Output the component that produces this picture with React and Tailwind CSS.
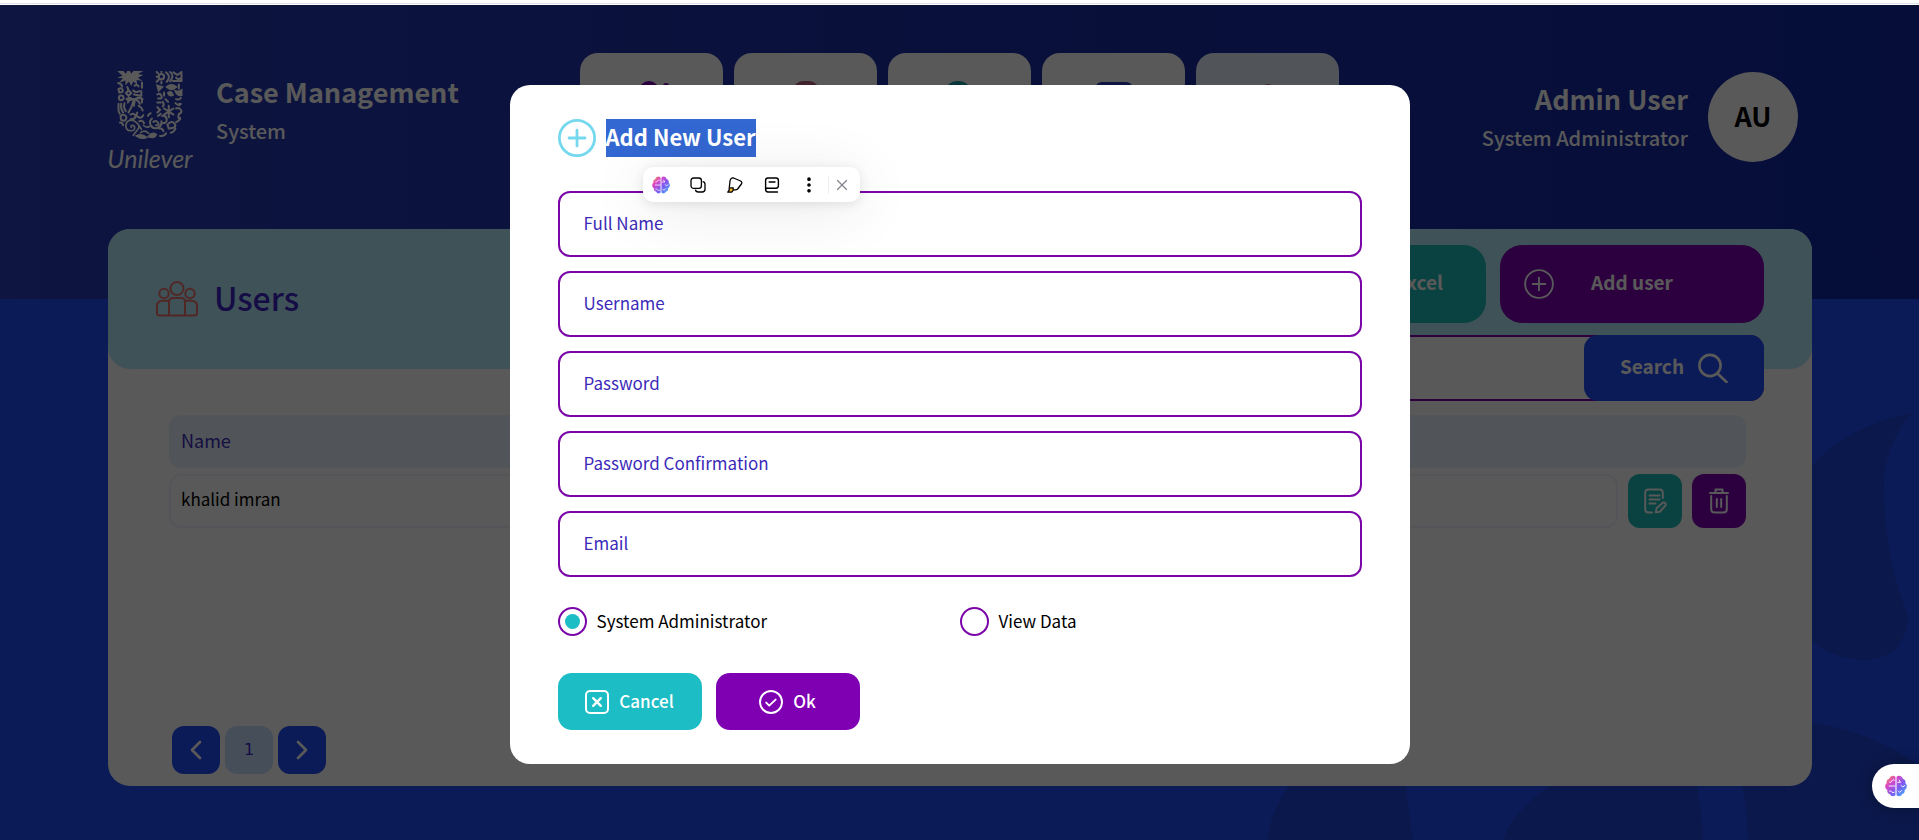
import { useState } from 'react'
import { ChevronLeft, ChevronRight, EllipsisVertical, X } from 'lucide-react'

const FIELDS = [
  { name: 'fullName', label: 'Full Name', type: 'text' },
  { name: 'username', label: 'Username', type: 'text' },
  { name: 'password', label: 'Password', type: 'password' },
  { name: 'passwordConfirmation', label: 'Password Confirmation', type: 'password' },
  { name: 'email', label: 'Email', type: 'email' },
]

const USERS = [{ id: 1, name: 'khalid imran' }]

export default function App() {
  return (
    <div className="min-h-screen flex flex-col bg-[#224df8] font-['Noto_Sans_CJK_SC',sans-serif]">
      <div className="h-[5px] bg-white border-t-[3px] border-white">
        <div className="h-px bg-[#dde3e8]" />
      </div>
      <div className="relative flex-1 flex flex-col overflow-hidden">
        <div className="absolute inset-x-0 top-0 h-[294px] bg-linear-to-r from-[#283cb7] via-[#1a30a8] to-[#1027a2]" />
        <Swirls />
        <Header />
        <UsersCard />
      </div>
      <AddUserModal />
      <button
        aria-label="Open assistant"
        className="fixed right-0 bottom-8 w-[47px] h-11 pl-[13px] rounded-l-full bg-white flex items-center shadow-[0_0_16px_rgba(0,0,0,0.3)]"
      >
        <BrainIcon className="size-[22px]" />
      </button>
    </div>
  )
}

function Header() {
  return (
    <header className="relative h-56 shrink-0 pl-[108px] pr-[121px] flex items-start justify-between">
      <div className="flex-1 flex gap-6 pt-[66px]">
        <Logo />
        <div className="text-white">
          <div className="text-[27px] leading-[42px] font-bold">Case Management</div>
          <div className="text-xl leading-[36px] font-medium">System</div>
        </div>
      </div>
      <nav className="flex gap-[11px] pt-12 ml-[13px]">
        <NavCard label="Cases">
          <circle cx="17" cy="10" r="10" fill="#7f00b2" />
          <circle cx="34" cy="5" r="3" fill="#7f00b2" />
        </NavCard>
        <NavCard label="Reports">
          <rect x="7" y="0" width="26" height="30" rx="10" fill="#b8607f" />
        </NavCard>
        <NavCard label="Customers">
          <circle cx="18" cy="15" r="15" fill="#1d9da5" />
        </NavCard>
        <NavCard label="Data">
          <rect x="1" y="1" width="38" height="30" rx="7" fill="#283cb7" />
        </NavCard>
        <NavCard label="Users" active>
          <circle cx="20" cy="9" r="5" fill="none" stroke="#e8605c" strokeWidth="2" />
        </NavCard>
      </nav>
      <div className="flex-1 flex justify-end items-start gap-5 pt-[67px] text-white">
        <div className="text-right pt-1.5">
          <div className="text-[27px] leading-[42px] font-bold">Admin User</div>
          <div className="text-xl leading-[36px] font-medium">System Administrator</div>
        </div>
        <div className="size-[90px] pb-0.5 rounded-full bg-white text-black text-[27px] font-bold flex items-center justify-center">
          AU
        </div>
      </div>
    </header>
  )
}

function NavCard({ label, active, children }) {
  return (
    <a
      href="#"
      aria-label={label}
      className={`w-[143px] h-32 pt-7 rounded-[18px] flex justify-center ${active ? 'bg-[#e7f0ff]' : 'bg-white'}`}
    >
      <svg viewBox="0 0 40 40" className="size-10">
        {children}
      </svg>
    </a>
  )
}

function UsersCard() {
  return (
    <main className="relative flex-1 flex flex-col ml-[108px] mr-[107px] mb-[54px] rounded-[22px] bg-white">
      <div className="h-[140px] rounded-[22px] bg-[#b4eafb] pl-12 pr-12 flex justify-between">
        <h1 className="flex items-center gap-4 text-[32px] font-medium text-[#3c22c5]">
          <UsersIcon className="w-[42px] h-9" />
          <span className="pb-1">Users</span>
        </h1>
        <div className="w-[760px] pt-4 flex flex-col gap-3">
          <div className="flex justify-end gap-3.5 text-[19px] font-bold text-white">
            <button className="w-[264px] h-[78px] shrink-0 pr-[43px] pb-1 rounded-[22px] bg-[#1dbdb9] text-right">
              Export to Excel
            </button>
            <button className="w-[264px] h-[78px] shrink-0 px-6 rounded-[22px] bg-[#7f00b2] grid grid-cols-[30px_1fr_30px] items-center">
              <PlusCircle className="size-[30px]" width={1.9} />
              <span className="pb-1">Add user</span>
            </button>
          </div>
          <div className="h-[66px] shrink-0 flex rounded-[14px] border-2 border-[#7f00b2] bg-white">
            <input aria-label="Search users" className="flex-1 min-w-0 px-6 outline-none" />
            <button className="w-[180px] -m-0.5 rounded-[14px] bg-[#224df8] flex items-center justify-center gap-3.5 text-[19px] font-bold text-white">
              <span className="pb-1">Search</span>
              <svg viewBox="0 0 30 30" className="size-[30px]" fill="none" stroke="currentColor" strokeWidth="2.6" strokeLinecap="round">
                <circle cx="12" cy="12.5" r="10.600" />
                <path d="M20 21l8.500 8" />
              </svg>
            </button>
          </div>
        </div>
      </div>

      <table className="mt-10 ml-[61px] mr-[66px] border-separate border-spacing-x-0 border-spacing-y-1.5 text-left">
        <thead>
          <tr className="h-[53px] text-lg text-[#3c2bb9]">
            <th className="pl-3 pt-0 pb-1 rounded-l-xl bg-[#e7f0ff] font-normal">Name</th>
            <td className="w-32 rounded-r-xl bg-[#e7f0ff]" />
          </tr>
        </thead>
        <tbody>
          {USERS.map((u) => (
            <tr key={u.id} className="h-[54px] text-[17px]">
              <td className="pl-2.5 pt-0 pb-1 rounded-xl border-2 border-[#f0f3ff]">{u.name}</td>
              <td className="w-32 p-0">
                <div className="flex justify-end gap-2.5 text-white">
                  <button aria-label="Edit" className="size-[54px] rounded-xl bg-[#1dbdb9] flex items-center justify-center">
                    <EditIcon />
                  </button>
                  <button aria-label="Delete" className="size-[54px] rounded-xl bg-[#7f00b2] flex items-center justify-center">
                    <TrashIcon />
                  </button>
                </div>
              </td>
            </tr>
          ))}
        </tbody>
      </table>

      <div className="mt-auto pl-16 pb-3 flex gap-[5px]">
        <button aria-label="Previous page" className="size-12 rounded-xl bg-[#224df8] text-white flex items-center justify-center">
          <ChevronLeft className="size-8" />
        </button>
        <button className="size-12 rounded-xl bg-[#c8e3ff] text-[#3c22c5] font-['DejaVu_Sans',sans-serif] text-base">1</button>
        <button aria-label="Next page" className="size-12 rounded-xl bg-[#224df8] text-white flex items-center justify-center">
          <ChevronRight className="size-8" />
        </button>
      </div>
    </main>
  )
}

function AddUserModal() {
  const [role, setRole] = useState('admin')
  return (
    <div className="fixed inset-x-0 bottom-0 top-[5px] pt-1 bg-black/65 flex items-center justify-center">
      <form className="relative w-[900px] px-12 py-[34px] rounded-[20px] bg-white">
        <h2 className="flex items-center gap-2.5 text-[22px] leading-[34px] font-bold text-white">
          <PlusCircle className="size-[38px] text-[#75d8ee]" width={2.2} />
          <span className="pb-1 bg-[#3367d1]">Add New User</span>
        </h2>
        <div className="mt-[34px] flex flex-col gap-3.5">
          {FIELDS.map((f) => (
            <input
              key={f.name}
              name={f.name}
              type={f.type}
              placeholder={f.label}
              aria-label={f.label}
              className="h-[66px] px-6 pb-1 rounded-xl border-2 border-[#7a06a8] text-[17px] outline-none placeholder:text-[#3c2bb9]"
            />
          ))}
        </div>
        <div className="mt-[30px] grid grid-cols-2 text-[17px] leading-[27px] text-black">
          <RoleRadio label="System Administrator" value="admin" role={role} onChange={setRole} />
          <RoleRadio label="View Data" value="view" role={role} onChange={setRole} />
        </div>
        <div className="mt-[37px] flex gap-3.5 text-[17px] font-medium text-white">
          <button type="button" className="w-36 h-[57px] rounded-[14px] bg-[#1dbdc5] flex items-center justify-center gap-2.5">
            <svg viewBox="0 0 24 24" className="size-6" fill="none" stroke="currentColor" strokeWidth="2" strokeLinecap="round">
              <rect x="1" y="1" width="22" height="22" rx="4" />
              <path d="M8.200 8.200l7.600 7.600M15.800 8.200l-7.600 7.600" strokeWidth="2.400" />
            </svg>
            <span className="pb-0.5">Cancel</span>
          </button>
          <button type="button" className="w-36 h-[57px] rounded-[14px] bg-[#7f00b2] flex items-center justify-center gap-2.5">
            <svg viewBox="0 0 24 24" className="size-6" fill="none" stroke="currentColor" strokeWidth="1.900" strokeLinecap="round" strokeLinejoin="round">
              <circle cx="12" cy="12" r="11" />
              <path d="M7.200 12.600l3 3 6.400-6" />
            </svg>
            <span className="pb-0.5">Ok</span>
          </button>
        </div>
        <SelectionToolbar />
      </form>
    </div>
  )
}

function RoleRadio({ label, value, role, onChange }) {
  return (
    <label className="flex items-center gap-2.5">
      <input
        type="radio"
        name="role"
        checked={role === value}
        onChange={() => onChange(value)}
        className="appearance-none size-[29px] rounded-full border-2 border-[#7a06a8] bg-clip-content p-[5px] checked:bg-[#1dbdc5]"
      />
      <span className="pb-0.5">{label}</span>
    </label>
  )
}

function SelectionToolbar() {
  return (
    <div className="absolute left-[133px] top-[82px] w-[217px] h-[35px] pr-1 rounded-[10px] bg-white text-black flex items-center shadow-[0_8px_60px_rgba(0,0,0,0.1),0_2px_12px_rgba(0,0,0,0.1)]">
      <ToolButton label="Ask">
        <BrainIcon className="size-[18px]" />
      </ToolButton>
      <ToolButton label="Copy">
        <svg viewBox="0 0 16 16" className="size-4" fill="none" stroke="currentColor" strokeWidth="1.300">
          <rect x="1" y="1" width="10.400" height="10.400" rx="2.600" />
          <path d="M12.600 4.600c1.600.2 2.400 1 2.400 2.600v5c0 1.900-.9 2.800-2.800 2.800H8.400c-1.900 0-2.800-.8-3-2.300" />
        </svg>
      </ToolButton>
      <ToolButton label="Highlight">
        <svg viewBox="0 0 16 16" className="size-4" fill="none" stroke="currentColor" strokeWidth="1.300" strokeLinejoin="round">
          <path d="M2.300 10.500L3 4Q3.600.4 6.600 1L13.600 4Q15.600 5.200 14.400 7L10.600 12Q9.400 13.300 6.600 12.800" />
          <path d="M2.200 10.800h4v2.500l-1.500 1.900H.8l1.400-2z" fill="#f2b632" />
        </svg>
      </ToolButton>
      <ToolButton label="Note">
        <svg viewBox="0 0 16 16" className="size-4" fill="none" stroke="currentColor" strokeWidth="1.400" strokeLinecap="round">
          <path d="M3 11.200h9c1.600 0 2.400-.8 2.400-2.400V3.400c0-1.600-.8-2.400-2.400-2.400H4C2.400 1 1.600 1.800 1.600 3.400v9.200c0 1.600.8 2.400 2.400 2.400h9.500" />
          <path d="M1.600 12.600c0-.9.500-1.400 1.400-1.400M5.200 5h5.800" />
        </svg>
      </ToolButton>
      <ToolButton label="More">
        <EllipsisVertical className="size-5" strokeWidth={2.4} />
      </ToolButton>
      <div className="w-px h-[18px] bg-[#eeeef2]" />
      <button type="button" aria-label="Close" className="flex-1 flex justify-center text-[#85858f]">
        <X className="size-[18px]" strokeWidth={1.6} />
      </button>
    </div>
  )
}

function ToolButton({ label, children }) {
  return (
    <button type="button" aria-label={label} className="w-[37px] flex justify-center">
      {children}
    </button>
  )
}

function PlusCircle({ className, width }) {
  return (
    <svg viewBox="0 0 30 30" className={className} fill="none" stroke="currentColor" strokeWidth={width} strokeLinecap="round">
      <circle cx="15" cy="15" r="13.900" />
      <path d="M15 8.700v12.600M8.700 15h12.600" />
    </svg>
  )
}

function UsersIcon({ className }) {
  return (
    <svg viewBox="0 0 42 36" className={className} fill="none" stroke="#e8706c" strokeWidth="2">
      <circle cx="21" cy="7.500" r="6.500" />
      <circle cx="8" cy="12.500" r="4.700" />
      <circle cx="34" cy="12.500" r="4.700" />
      <path d="M13 34.500V21q0-4 4-4h8q4 0 4 4v13.500" />
      <path d="M13 19.800H6.500Q1 19.800 1 25.500V32q0 2.500 2.500 2.500h35Q41 34.500 41 32v-6.500q0-5.700-5.500-5.700H29" />
    </svg>
  )
}

function EditIcon() {
  return (
    <svg viewBox="0 0 24 26" className="w-6 h-[26px]" fill="none" stroke="currentColor" strokeWidth="1.900" strokeLinecap="round" strokeLinejoin="round">
      <path d="M9 24.500H5.500Q2.200 24.500 2.200 21.200V4.800Q2.200 1.500 5.500 1.500h11Q19.800 1.500 19.800 4.800V10" />
      <path d="M6.500 7.500h10M6.500 11.500h10M6.500 15.500h6" />
      <path d="M12.800 24.300l.7-4 6.300-5.600q1.500-.7 2.500.5t.2 2.300l-5.700 6.300z" />
    </svg>
  )
}

function TrashIcon() {
  return (
    <svg viewBox="0 0 22 26" className="w-[22px] h-[26px]" fill="none" stroke="currentColor" strokeWidth="2" strokeLinecap="round" strokeLinejoin="round">
      <path d="M2 5h18M7.500 4.500V1.500h7v3" />
      <path d="M3.200 8v13q0 3.500 3.500 3.500h8.600q3.500 0 3.500-3.500V8M8.800 11v8M13.200 11v8" />
    </svg>
  )
}

function BrainIcon({ className }) {
  return (
    <svg viewBox="0 0 24 24" className={className}>
      <defs>
        <linearGradient id="brain" x1="0" y1="0" x2="1" y2="1">
          <stop offset="0" stopColor="#f9a03f" />
          <stop offset="0.3" stopColor="#d946c8" />
          <stop offset="0.6" stopColor="#7c5cf0" />
          <stop offset="1" stopColor="#38b6ff" />
        </linearGradient>
      </defs>
      <path
        fill="url(#brain)"
        d="M11.400 2v20c-2 2-5.200 1.400-6-1.200-2.200-.4-3.400-2.400-2.800-4.400C-.2 15-.6 10.600 1.800 9 1.200 6.600 2.400 4.600 4.600 4 5.400.8 9.600-.2 11.400 2zM12.600 2v20c2 2 5.200 1.400 6-1.200 2.200-.4 3.400-2.400 2.800-4.400 2.800-1.400 3.200-5.800.8-7.400.6-2.400-.6-4.400-2.800-5C18.600.8 14.400-.2 12.600 2z"
      />
      <path
        fill="none"
        stroke="#fff"
        strokeWidth="1"
        strokeLinecap="round"
        d="M11 12H4.500M5 8q1.500.8 2.500-1.500T10 5.500M5 17.500q1.500-.5 2.500 1t2.500.5M14 8h3l-1.500-2.500M17.500 11.500l2 1.500 2-1.500M14.500 17.500l1.500 1.500 2-2"
      />
    </svg>
  )
}

function Logo() {
  return (
    <div className="w-[84px] flex flex-col items-center text-white">
      <svg viewBox="0 0 196 206" className="w-[66px] h-[69px]" fill="none" stroke="currentColor" strokeWidth="6" strokeLinecap="round">
        {/* left arm: sun, flower, fish, palm */}
        <path fill="currentColor" stroke="none" d="M0 0h18l8 8 4-8h8l4 8 6-8h30l-16 9 16 3-16 8 14 10-18-3 2 14-12-10-6 14-7-14-11 12 1-15-20 8 12-14L0 20l16-6z" />
        <path d="M3 36q10 2 12 10M30 48q6 8 0 14M52 44q8-6 12 2M74 34v16M4 54q8-6 12 2t-10 8zM26 66l8-8 8 8-8 8zM48 58q8 8 18 2M72 60v14M50 70l20 4" />
        <circle cx="12" cy="80" r="7" />
        <path fill="currentColor" d="M28 84q10-8 16 0-8 8-16 0zM54 84q12-10 22 0" />
        <path d="M50 84q-6 24-16 40M50 84q-14-2-18 10M50 84q14 2 18 14M50 84q4 10 0 20M74 84v10" />
        <path d="M4 98v18q0 8 4 12M12 98q-2 16 6 26M22 96q-4 14 4 24M64 104q10 4 12 14" />
        {/* bowl of the U: spiral, leaves, waves */}
        <path d="M10 136q4-8 12-4t4 12-14 2zM8 154q6-2 10 8M40 130q12-6 14 4T40 144M60 124q-6 10 4 14t14-6M66 150q12-4 14 6" />
        <path d="M42 168q-2-6 4-6 8 2 6 10t-14 6-12-14 10-16 22 6 4 20-14 18M62 158l10 16M78 162q8 8 18 4M70 184q12-10 24 2" strokeWidth="5" />
        <path fill="currentColor" d="M58 194q16-8 28 4-14 6-28-4zM94 196q10-14 22-6-4 12-22 6z" />
        <path d="M104 142q-10 8-4 20t20 8 12-20M108 152q8-6 14 2t-6 8M92 134q2-6 8-8M134 134q12-2 14 10t-14 12M126 172q10-2 12 8M128 194q12 2 18-8M150 160q14-14 22-2t-18 14zM160 184q8 0 14-12M184 130q-4 10 4 14M176 152q10-2 12-12" />
        {/* right arm: sun, bird, lips, bees, snowflake */}
        <circle cx="132" cy="17" r="8" />
        <path d="M118 3l4 4M132 0v3M118 32l6-6M132 32v5M118 17h3M146 4q16 12 2 28M158 3q14 10 0 28M168 4l12 8L192 3M166 30h26V8M176 20q6 6 14 2" />
        <path fill="currentColor" d="M148 48q14-12 28 0-14 12-28 0zM120 44l14 4-10 10zM174 60q10 4 18-2v14q-12 2-18-12zM152 66q10-8 14 6-10 4-14-6z" />
        <path d="M120 70q8-6 12 4t-10 8M140 64v10M144 84l8 8M120 94h10M136 92q6 8 0 14M184 40v12M176 84q10 4 14-4M174 96q8 8 16 2" />
        <path d="M154 104v34M140 112l28 18M140 130l28-18M120 108l8 8-8 8M122 134l8-6M176 112q8-4 14 4t-6 12M186 98v4" />
      </svg>
      <span className="font-['Lato',sans-serif] italic text-[25px] leading-9">Unilever</span>
    </div>
  )
}

// faint leaf shapes behind the card
function Swirls() {
  return (
    <svg viewBox="0 0 660 440" className="absolute right-0 bottom-0 w-[660px] h-[440px]" fill="#2046d6">
      <path d="M553 65Q591 25 653 13 621 50 625 100 629 170 649 215 646 260 604 260 571 258 553 240z" />
      <path d="M553 322Q620 335 660 366V440H489Q488 410 482 380z" />
      <path d="M291 386H438Q443 410 444 440H244Q255 410 291 386z" />
      <path d="M30 386H147Q149 410 154 440H8Q12 410 30 386z" />
    </svg>
  )
}
